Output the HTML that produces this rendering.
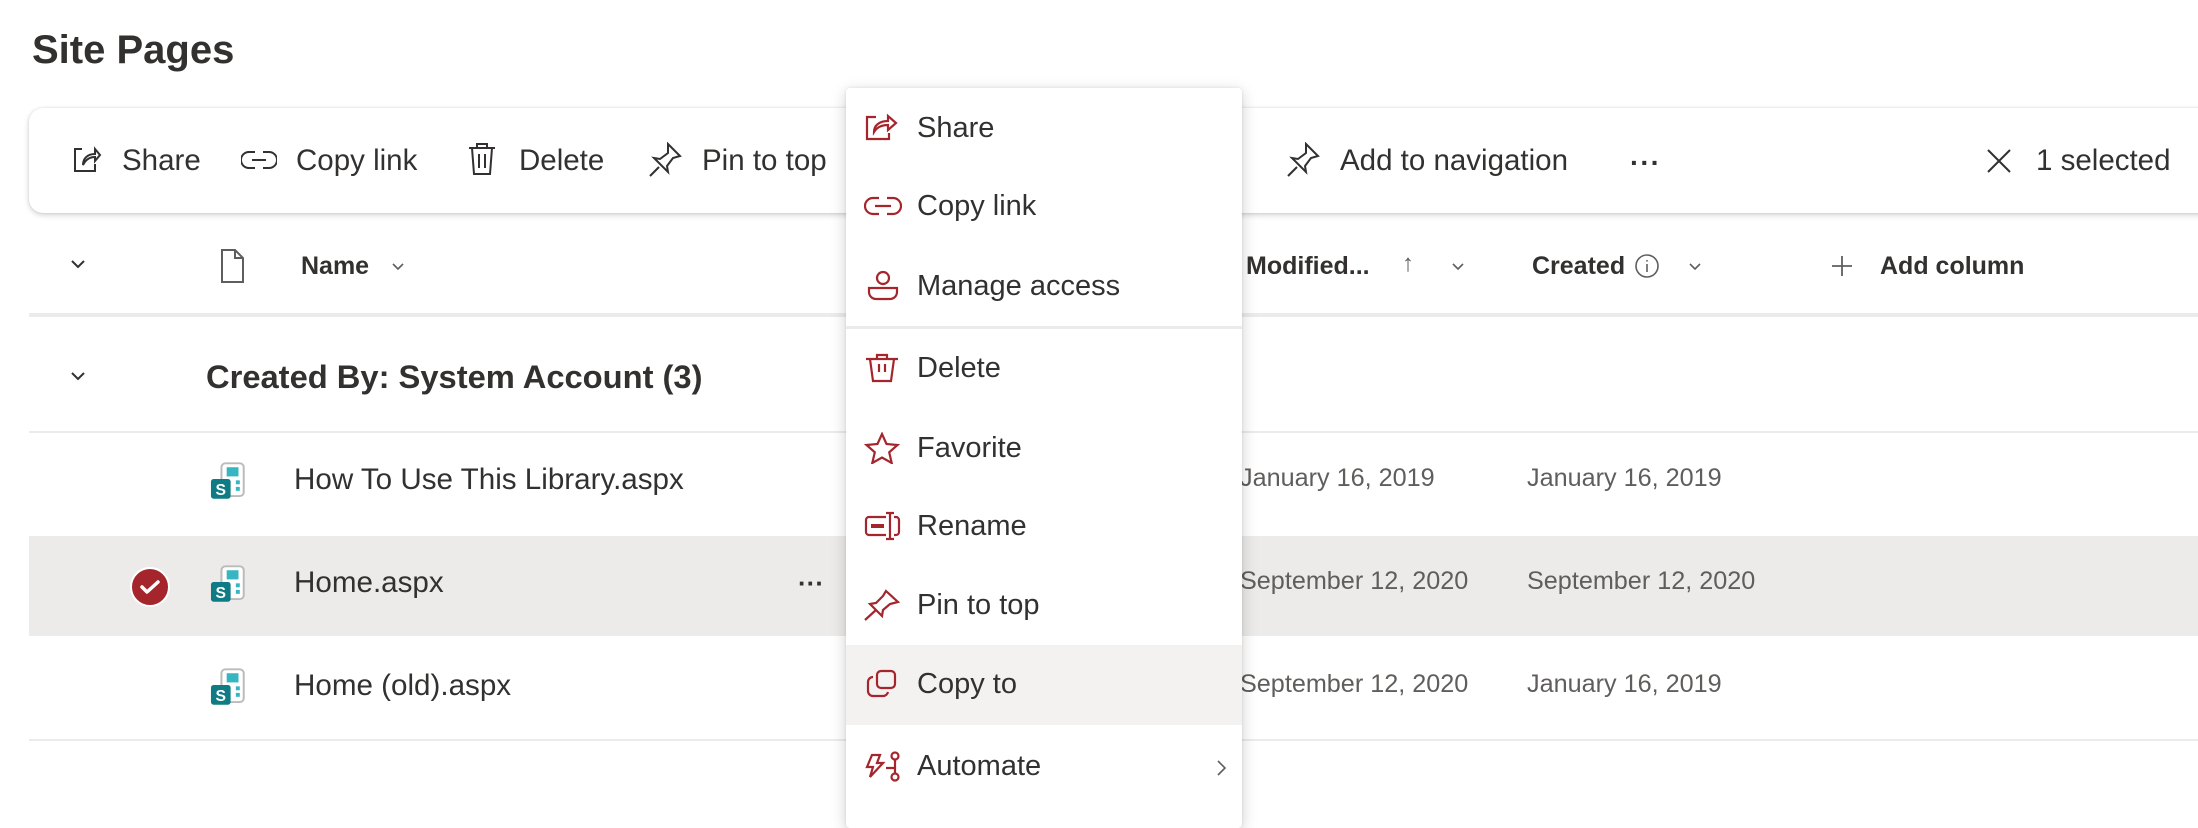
<!DOCTYPE html>
<html><head><meta charset="utf-8"><style>
*{margin:0;padding:0;box-sizing:border-box}
body{width:2198px;height:814px;overflow:hidden;background:#fff;font-family:"Liberation Sans",sans-serif;color:#323130;position:relative}
.a{position:absolute;white-space:nowrap}
.tb{position:absolute;left:29px;top:108px;width:2200px;height:105px;border-radius:14px;background:#fff;box-shadow:0 2px 6px rgba(0,0,0,.18),0 0 2px rgba(0,0,0,.1)}
.t{font-size:29.5px;top:144px;color:#323130}
.ic{position:absolute}
.h{font-size:25px;font-weight:bold;top:252px;color:#323130}
.line{position:absolute;left:29px;width:2169px;background:#edebe9}
.r{font-size:29.6px}
.d{font-size:25.2px;color:#605e5c}
.menu{position:absolute;left:846px;top:88px;width:396px;height:740px;background:#fff;box-shadow:0 4px 16px rgba(0,0,0,.18),0 0 3px rgba(0,0,0,.1);border-radius:4px}
.mi{position:absolute;left:0;width:396px;height:56px}
.mi span{position:absolute;left:71px;top:11px;font-size:29px;color:#323130}
.mi svg{position:absolute;left:18px;top:11px}
</style></head><body>
<div class="a" style="left:32px;top:28px;font-size:40px;font-weight:bold;color:#323130">Site Pages</div>

<div class="tb"></div>
<svg class="ic" style="left:70px;top:144px" width="32" height="32" viewBox="0 0 32 32" fill="none" stroke="#323130" stroke-width="2"><path d="M12 5H5v22h20v-7"/><path d="M13 21c0-7 5-11 12-11V5l5 6-5 6v-4c-5 0-9 2-12 8z"/></svg>
<div class="a t" style="left:122px">Share</div>
<svg class="ic" style="left:241px;top:148px" width="36" height="24" viewBox="0 0 36 24" fill="none" stroke="#323130" stroke-width="2"><path d="M14 4H8a8 8 0 0 0 0 16h6M22 4h6a8 8 0 0 1 0 16h-6M11 12h14"/></svg>
<div class="a t" style="left:296px">Copy link</div>
<svg class="ic" style="left:466px;top:141px" width="32" height="36" viewBox="0 0 32 36" fill="none" stroke="#323130" stroke-width="2"><path d="M3 7h26M11 7V3h10v4M6 7l2 26h16l2-26M13 13v14M19 13v14"/></svg>
<div class="a t" style="left:519px">Delete</div>
<svg class="ic" style="left:648px;top:142px" width="36" height="36" viewBox="0 0 36 36" fill="none" stroke="#323130" stroke-width="2"><path d="M20 2l12 12-7 2-6 8 1 6-14-14 6 1 8-6z"/><path d="M11 25L2 34"/></svg>
<div class="a t" style="left:702px">Pin to top</div>
<svg class="ic" style="left:1286px;top:142px" width="36" height="36" viewBox="0 0 36 36" fill="none" stroke="#323130" stroke-width="2"><path d="M20 2l12 12-7 2-6 8 1 6-14-14 6 1 8-6z"/><path d="M11 25L2 34"/></svg>
<div class="a t" style="left:1340px">Add to navigation</div>
<div class="a" style="left:1630px;top:147px;font-size:28px;font-weight:bold;letter-spacing:1px">···</div>
<svg class="ic" style="left:1986px;top:148px" width="26" height="26" viewBox="0 0 26 26" stroke="#323130" stroke-width="2"><path d="M2 2l22 22M24 2L2 24"/></svg>
<div class="a t" style="left:2036px">1 selected</div>

<!-- header -->
<svg class="ic" style="left:70px;top:258px" width="16" height="12" viewBox="0 0 16 12" fill="none" stroke="#323130" stroke-width="2"><path d="M2 3l6 6 6-6"/></svg>
<svg class="ic" style="left:219px;top:248px" width="26" height="36" viewBox="0 0 26 36" fill="none" stroke="#605e5c" stroke-width="2"><path d="M3 2h13l8 8v24H3z M16 2v8h8"/></svg>
<div class="a h" style="left:301px">Name</div>
<svg class="ic" style="left:391px;top:262px" width="14" height="10" viewBox="0 0 14 10" fill="none" stroke="#605e5c" stroke-width="1.6"><path d="M2 2l5 5 5-5"/></svg>
<div class="a h" style="left:1246px">Modified...</div>
<div class="a" style="left:1402px;top:250px;font-size:24px;color:#605e5c">↑</div>
<svg class="ic" style="left:1451px;top:262px" width="14" height="10" viewBox="0 0 14 10" fill="none" stroke="#605e5c" stroke-width="1.6"><path d="M2 2l5 5 5-5"/></svg>
<div class="a h" style="left:1532px">Created</div>
<svg class="ic" style="left:1634px;top:253px" width="26" height="26" viewBox="0 0 26 26" fill="none" stroke="#605e5c" stroke-width="1.6"><circle cx="13" cy="13" r="11"/><path d="M13 11v8M13 7v1.5"/></svg>
<svg class="ic" style="left:1688px;top:262px" width="14" height="10" viewBox="0 0 14 10" fill="none" stroke="#605e5c" stroke-width="1.6"><path d="M2 2l5 5 5-5"/></svg>
<svg class="ic" style="left:1831px;top:255px" width="22" height="22" viewBox="0 0 22 22" stroke="#605e5c" stroke-width="1.8"><path d="M11 1v20M1 11h20"/></svg>
<div class="a h" style="left:1880px">Add column</div>
<div class="line" style="top:313px;height:4px"></div>

<!-- group -->
<svg class="ic" style="left:70px;top:370px" width="16" height="12" viewBox="0 0 16 12" fill="none" stroke="#323130" stroke-width="2"><path d="M2 3l6 6 6-6"/></svg>
<div class="a" style="left:206px;top:358px;font-size:32.7px;font-weight:bold">Created By: System Account (3)</div>
<div class="line" style="top:431px;height:2px"></div>

<!-- rows -->
<div style="position:absolute;left:29px;top:537px;width:2169px;height:99px;background:#edebe9"></div>
<div class="line" style="top:536px;height:2px"></div>
<div class="line" style="top:739px;height:2px"></div>

<svg style="position:absolute;left:0;top:0;width:0;height:0"><defs><g id="sp"><rect x="9" y="1" width="17" height="25" rx="3" fill="#fff" stroke="#bbb" stroke-width="1.5"/><rect x="13" y="4" width="9" height="7" fill="#37b5c1"/><rect x="20" y="14" width="3" height="3" fill="#37b5c1"/><rect x="20" y="19" width="3" height="3" fill="#37b5c1"/><rect x="1" y="13" width="15" height="15" rx="2" fill="#0f7b85"/><text x="8.5" y="25" font-size="12" font-weight="bold" fill="#fff" text-anchor="middle" font-family="Liberation Sans">S</text></g></defs></svg>
<svg class="ic" style="left:209px;top:462px" width="38" height="38" viewBox="0 0 28 29"><use href="#sp"/></svg>
<div class="a r" style="left:294px;top:463px">How To Use This Library.aspx</div>
<div class="a d" style="left:1240px;top:464px">January 16, 2019</div>
<div class="a d" style="left:1527px;top:464px">January 16, 2019</div>

<svg class="ic" style="left:129px;top:566px" width="42" height="42" viewBox="0 0 42 42"><circle cx="21" cy="21" r="19" fill="#a4262c" stroke="#fff" stroke-width="2"/><path d="M13 21l5 5 11-10" fill="none" stroke="#fff" stroke-width="3.5" stroke-linecap="round" stroke-linejoin="round"/></svg>
<svg class="ic" style="left:209px;top:565px" width="38" height="38" viewBox="0 0 28 29"><use href="#sp"/></svg>
<div class="a r" style="left:294px;top:566px">Home.aspx</div>
<div class="a" style="left:798px;top:568px;font-size:26px;font-weight:bold;color:#323130">···</div>
<div class="a d" style="left:1240px;top:567px">September 12, 2020</div>
<div class="a d" style="left:1527px;top:567px">September 12, 2020</div>

<svg class="ic" style="left:209px;top:668px" width="38" height="38" viewBox="0 0 28 29"><use href="#sp"/></svg>
<div class="a r" style="left:294px;top:669px">Home (old).aspx</div>
<div class="a d" style="left:1240px;top:670px">September 12, 2020</div>
<div class="a d" style="left:1527px;top:670px">January 16, 2019</div>

<!-- menu -->
<div class="menu">
 <div class="mi" style="top:13px"><svg width="36" height="32" viewBox="0 0 36 32" fill="none" stroke="#a4262c" stroke-width="2.2"><path d="M12 5H3v22h22v-6"/><path d="M10 20c0-7 6-11 14-11V4l8 7-8 7v-5c-6 0-11 2-14 7z"/></svg><span>Share</span></div>
 <div class="mi" style="top:91px"><svg width="38" height="32" viewBox="0 0 38 32" fill="none" stroke="#a4262c" stroke-width="2.2"><path d="M15 8H9a8 8 0 0 0 0 16h6M23 8h6a8 8 0 0 1 0 16h-6M11 16h16"/></svg><span>Copy link</span></div>
 <div class="mi" style="top:171px"><svg width="36" height="32" viewBox="0 0 36 32" fill="none" stroke="#a4262c" stroke-width="2.2"><circle cx="19" cy="8" r="6"/><path d="M5 18h28v4a7 7 0 0 1-7 7H12a7 7 0 0 1-7-7z"/></svg><span>Manage access</span></div>
 <div style="position:absolute;left:0;top:238px;width:396px;height:3px;background:#edebe9"></div>
 <div class="mi" style="top:253px"><svg width="36" height="32" viewBox="0 0 36 32" fill="none" stroke="#a4262c" stroke-width="2.2"><path d="M2 7h32M13 7V3h10v4M6 7l3 22h18l3-22M15 12v8M21 12v8"/></svg><span>Delete</span></div>
 <div class="mi" style="top:333px"><svg width="36" height="32" viewBox="0 0 36 32" fill="none" stroke="#a4262c" stroke-width="2.2"><path d="M18 2l4.5 10 11 1-8.3 7.3 2.5 10.7L18 25.5 8.3 31l2.5-10.7L2.5 13l11-1z"/></svg><span>Favorite</span></div>
 <div class="mi" style="top:411px"><svg width="38" height="32" viewBox="0 0 38 32" fill="none" stroke="#a4262c" stroke-width="2.2"><path d="M22 7H5a3 3 0 0 0-3 3v12a3 3 0 0 0 3 3h17M30 7h2a3 3 0 0 1 3 3v12a3 3 0 0 1-3 3h-2M26 3v26M22 3h8M22 29h8"/><path d="M7 16h13" stroke-width="4"/></svg><span>Rename</span></div>
 <div class="mi" style="top:490px"><svg width="36" height="32" viewBox="0 0 36 32" fill="none" stroke="#a4262c" stroke-width="2.2"><path d="M22 2l12 11-8 2-7 6-1 6L6 15l6-1 7-7z"/><path d="M12 21L1 31"/></svg><span>Pin to top</span></div>
 <div class="mi" style="top:557px;height:80px;background:#f3f2f1"><svg style="top:23px" width="36" height="32" viewBox="0 0 36 32" fill="none" stroke="#a4262c" stroke-width="2.2"><rect x="13" y="3" width="18" height="17" rx="4"/><path d="M9 9a5 5 0 0 0-5 5v9a5 5 0 0 0 5 5h10a5 5 0 0 0 5-4"/></svg><span style="top:23px">Copy to</span></div>
 <div class="mi" style="top:651px"><svg width="38" height="34" viewBox="0 0 38 34" fill="none" stroke="#a4262c" stroke-width="2.2"><path d="M8 5h8l-3 8h6L6 27l3-10H3z"/><circle cx="31" cy="6" r="3.5"/><circle cx="31" cy="27" r="3.5"/><path d="M31 10v13M22 18h9"/></svg><span>Automate</span>
 <svg style="position:absolute;left:370px;top:20px" width="12" height="18" viewBox="0 0 12 18" fill="none" stroke="#605e5c" stroke-width="1.6"><path d="M2 2l7 7-7 7"/></svg></div>
</div>
</body></html>
